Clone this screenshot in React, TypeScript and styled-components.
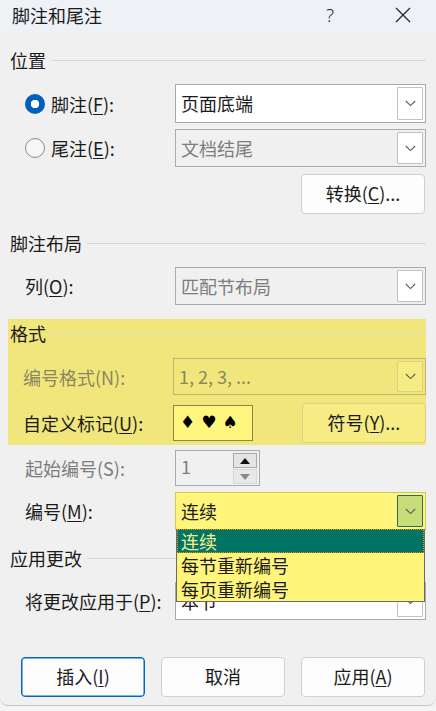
import React from 'react';
import styled, { createGlobalStyle, css } from 'styled-components';

const GlobalStyle = createGlobalStyle`
  html, body {
    margin: 0;
    padding: 0;
    background: #f4f4f4;
  }
  body {
    font-family: "Noto Sans CJK SC", "Noto Sans", sans-serif;
  }
`;

const Window = styled.div`
  width: 436px;
  height: 706px;
  box-sizing: border-box;
  background: #f0f0f0;
  border-bottom: 1px solid #c6c6c6;
  border-radius: 0 0 8px 8px;
  overflow: hidden;
  color: #1b1b1b;
  font-size: 18px;
  line-height: 1;
`;

const TitleBar = styled.div`
  display: flex;
  align-items: center;
  height: 35px;
  padding: 0 0 5px 12px;
  box-sizing: border-box;
  background: #eef2f6;
`;

const Title = styled.div`
  flex: 1;
  font-size: 18px;
`;

const TitleButton = styled.div<{ $width: number }>`
  display: flex;
  align-items: center;
  justify-content: center;
  width: ${(p) => p.$width}px;
  font-family: "Noto Sans", sans-serif;
  font-weight: 300;
  font-size: 19px;
  color: #333;
`;

const Content = styled.div`
  padding: 0 10px;
`;

const Heading = styled.div<{ $top: number }>`
  display: flex;
  align-items: center;
  gap: 5px;
  height: 24px;
  margin-top: ${(p) => p.$top}px;
  &::after {
    content: '';
    flex: 1;
    height: 1px;
    background: #d9d9d9;
  }
`;

const Row = styled.div<{ $top: number; $inset?: number; $raised?: boolean }>`
  position: relative;
  display: flex;
  align-items: center;
  margin-top: ${(p) => p.$top}px;
  padding-left: ${(p) => p.$inset ?? 15}px;
  ${(p) =>
    p.$raised &&
    css`
      z-index: 2;
    `}
`;

const RightRow = styled.div<{ $top: number }>`
  display: flex;
  justify-content: flex-end;
  margin-top: ${(p) => p.$top}px;
  padding-right: 1px;
`;

const Label = styled.div<{ $disabled?: boolean; $onYellow?: boolean }>`
  display: flex;
  align-items: center;
  gap: 6px;
  width: 150px;
  flex-shrink: 0;
  white-space: nowrap;
  color: ${(p) => (p.$disabled ? (p.$onYellow ? '#8c8660' : '#7d7d7d') : '#1b1b1b')};
`;

const Radio = styled.span<{ $checked?: boolean }>`
  width: 20px;
  height: 20px;
  box-sizing: border-box;
  border-radius: 50%;
  flex-shrink: 0;
  ${(p) =>
    p.$checked
      ? css`
          background: radial-gradient(circle, #ffffff 0 4px, #005fb8 4.5px);
        `
      : css`
          border: 1px solid #8a8a8a;
          background: #f6f6f6;
        `}
`;

type SelectKind = 'normal' | 'disabled' | 'yellowDisabled' | 'active';

const selectStyles: Record<SelectKind, ReturnType<typeof css>> = {
  normal: css`
    background: #ffffff;
    border-color: #a9a9a9;
    color: #1b1b1b;
  `,
  disabled: css`
    background: #f0f0f0;
    border-color: #ababab;
    color: #7d7d7d;
  `,
  yellowDisabled: css`
    background: transparent;
    border-color: #bdb56c;
    color: #8c8660;
  `,
  active: css`
    background: #fff57a;
    border-color: #d3c95a;
    color: #1b1b1b;
  `,
};

const SelectBox = styled.div<{ $kind: SelectKind; $height?: number }>`
  position: relative;
  flex: 1;
  display: flex;
  align-items: center;
  height: ${(p) => p.$height ?? 38}px;
  box-sizing: border-box;
  border: 1px solid;
  padding: 0 2px 0 5px;
  ${(p) => selectStyles[p.$kind]}
`;

const SelectValue = styled.div`
  flex: 1;
  padding-bottom: 1px;
`;

const arrowStyles: Record<SelectKind, ReturnType<typeof css>> = {
  normal: css`
    background: #ffffff;
    border-color: #c2c2c2;
  `,
  disabled: css`
    background: #ffffff;
    border-color: #c2c2c2;
  `,
  yellowDisabled: css`
    background: #f6ec84;
    border-color: #d9d08a;
  `,
  active: css`
    background: #c9dc7a;
    border-color: #2b6b63;
  `,
};

const ArrowBox = styled.div<{ $kind: SelectKind }>`
  display: flex;
  align-items: center;
  justify-content: center;
  width: 26px;
  align-self: stretch;
  margin: 2px 0;
  box-sizing: border-box;
  border: 1px solid;
  border-radius: 1px;
  ${(p) => arrowStyles[p.$kind]}
`;

const Chevron = () => (
  <svg width="11" height="7" viewBox="0 0 11 7">
    <path d="M0.8 1 L5.5 5.6 L10.2 1" fill="none" stroke="#5b5b5b" strokeWidth="1.1" />
  </svg>
);

const DialogButton = styled.button<{ $primary?: boolean; $yellow?: boolean }>`
  width: 124px;
  height: 40px;
  box-sizing: border-box;
  border: 1px solid ${(p) => (p.$primary ? '#0067c0' : p.$yellow ? '#dcd287' : '#d0d0d0')};
  border-radius: 4px;
  background: ${(p) => (p.$yellow ? '#f6ec83' : '#fdfdfd')};
  font-family: inherit;
  font-size: 18px;
  line-height: 1;
  color: #1b1b1b;
  padding: 0 0 2px;
  ${(p) =>
    p.$primary &&
    css`
      box-shadow: inset 0 0 0 0.5px #0067c0;
    `}
`;

const Highlight = styled.div`
  margin: 14px 0 0 -2px;
  padding: 2px 0 2px 2px;
  background: #f1e67b;
`;

const MarkInput = styled.div`
  display: flex;
  align-items: center;
  gap: 6px;
  width: 80px;
  height: 36px;
  box-sizing: border-box;
  border: 1px solid #8b8550;
  background: #fff67f;
  padding: 0 0 2px 6px;
  font-family: "DejaVu Sans", sans-serif;
  font-size: 17px;
  color: #000;
`;

const Spacer = styled.div`
  flex: 1;
`;

const SpinBox = styled.div`
  display: flex;
  align-items: flex-start;
  width: 85px;
  height: 36px;
  box-sizing: border-box;
  border: 1px solid #aaaaaa;
  background: #f0f0f0;
  padding: 2px 2px 2px 5px;
  color: #7d7d7d;
`;

const SpinValue = styled.div`
  flex: 1;
  padding-top: 4px;
`;

const SpinButtons = styled.div`
  display: flex;
  flex-direction: column;
  gap: 1px;
  width: 24px;
`;

const SpinButton = styled.div<{ $disabled?: boolean }>`
  display: flex;
  align-items: center;
  justify-content: center;
  height: 15px;
  box-sizing: border-box;
  border: 1px solid ${(p) => (p.$disabled ? '#d8d8d8' : '#a8a8a8')};
  background: ${(p) => (p.$disabled ? '#e8e8e8' : '#e4e4e4')};
`;

const Triangle = ({ up, color }: { up?: boolean; color: string }) => (
  <svg width="10" height="6" viewBox="0 0 10 6">
    <path d={up ? 'M0 6 L5 0 L10 6 Z' : 'M0 0 L5 6 L10 0 Z'} fill={color} />
  </svg>
);

const DropList = styled.div`
  position: absolute;
  top: 100%;
  left: 0;
  right: 0;
  z-index: 2;
  background: #fff57a;
  border: 1px solid #6a6a6a;
  border-top: none;
`;

const DropItem = styled.div<{ $selected?: boolean }>`
  height: 24px;
  box-sizing: border-box;
  display: flex;
  align-items: center;
  padding: 0 0 1px 4px;
  color: #1b1b1b;
  ${(p) =>
    p.$selected &&
    css`
      background: #007566;
      color: #fbee86;
      outline: 1px dotted #ff8c00;
      outline-offset: -1px;
    `}
`;

const Footer = styled.div`
  display: flex;
  justify-content: flex-end;
  gap: 16px;
  margin-top: 37px;
  padding-right: 1px;
`;

const Key = styled.span`
  text-decoration: underline;
  text-underline-offset: 2px;
  text-decoration-thickness: 1px;
`;

const Select = ({
  kind,
  value,
  height,
  children,
}: {
  kind: SelectKind;
  value: string;
  height?: number;
  children?: React.ReactNode;
}) => (
  <SelectBox $kind={kind} $height={height}>
    <SelectValue>{value}</SelectValue>
    <ArrowBox $kind={kind}>
      <Chevron />
    </ArrowBox>
    {children}
  </SelectBox>
);

export default function App() {
  return (
    <Window>
      <GlobalStyle />
      <TitleBar>
        <Title>脚注和尾注</Title>
        <TitleButton $width={80}>?</TitleButton>
        <TitleButton $width={66}>
          <svg width="16" height="16" viewBox="0 0 16 16">
            <path d="M1 1 L15 15 M15 1 L1 15" stroke="#2a2a2a" strokeWidth="1.3" />
          </svg>
        </TitleButton>
      </TitleBar>
      <Content>
        <Heading $top={13}>位置</Heading>
        <Row $top={12}>
          <Label>
            <Radio $checked />
            <span>
              脚注(<Key>F</Key>):
            </span>
          </Label>
          <Select kind="normal" value="页面底端" height={39} />
        </Row>
        <Row $top={6}>
          <Label>
            <Radio />
            <span>
              尾注(<Key>E</Key>):
            </span>
          </Label>
          <Select kind="disabled" value="文档结尾" />
        </Row>
        <RightRow $top={7}>
          <DialogButton>
            转换(<Key>C</Key>)...
          </DialogButton>
        </RightRow>

        <Heading $top={17}>脚注布局</Heading>
        <Row $top={12}>
          <Label>
            <span>
              列(<Key>O</Key>):
            </span>
          </Label>
          <Select kind="disabled" value="匹配节布局" />
        </Row>

        <Highlight>
          <Heading $top={0}>格式</Heading>
          <Row $top={13} $inset={13}>
            <Label $disabled $onYellow>
              <span>编号格式(N):</span>
            </Label>
            <Select kind="yellowDisabled" value="1, 2, 3, ..." height={37} />
          </Row>
          <Row $top={8} $inset={13}>
            <Label>
              <span>
                自定义标记(<Key>U</Key>):
              </span>
            </Label>
            <MarkInput>
              <span>♦</span>
              <span>♥</span>
              <span>♠</span>
            </MarkInput>
            <Spacer />
            <DialogButton $yellow>
              符号(<Key>Y</Key>)...
            </DialogButton>
          </Row>
        </Highlight>

        <Row $top={5}>
          <Label $disabled>
            <span>起始编号(S):</span>
          </Label>
          <SpinBox>
            <SpinValue>1</SpinValue>
            <SpinButtons>
              <SpinButton>
                <Triangle up color="#111" />
              </SpinButton>
              <SpinButton $disabled>
                <Triangle color="#8a8a8a" />
              </SpinButton>
            </SpinButtons>
          </SpinBox>
        </Row>
        <Row $top={6} $raised>
          <Label>
            <span>
              编号(<Key>M</Key>):
            </span>
          </Label>
          <Select kind="active" value="连续">
            <DropList>
              <DropItem $selected>连续</DropItem>
              <DropItem>每节重新编号</DropItem>
              <DropItem>每页重新编号</DropItem>
            </DropList>
          </Select>
        </Row>

        <Heading $top={16}>应用更改</Heading>
        <Row $top={12}>
          <Label>
            <span>
              将更改应用于(<Key>P</Key>):
            </span>
          </Label>
          <Select kind="normal" value="本节" />
        </Row>

        <Footer>
          <DialogButton $primary>
            插入(<Key>I</Key>)
          </DialogButton>
          <DialogButton>取消</DialogButton>
          <DialogButton>
            应用(<Key>A</Key>)
          </DialogButton>
        </Footer>
      </Content>
    </Window>
  );
}
